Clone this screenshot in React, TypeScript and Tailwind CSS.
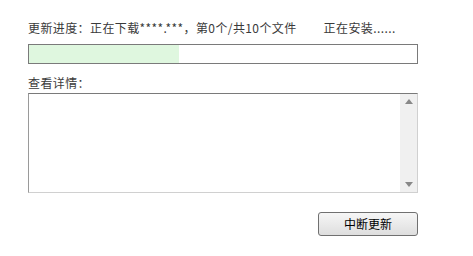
import React from 'react';

const font = { fontFamily: '"Microsoft YaHei", "Noto Sans CJK SC", "Liberation Sans", sans-serif' };

const UpdateDialog: React.FC = () => {
  const progress = 150 / 388;

  return (
    <div className="w-[473px] h-[256px] bg-white text-[#3a3a3a] text-[12px]" style={font}>
      <div className="pt-[20px] pl-[28px] w-[418px]">
        <div className="h-4 leading-4 flex whitespace-nowrap tracking-[0.4px]">
          <span>更新进度：正在下载****.***，第0个/共10个文件</span>
          <span className="ml-[27px]">正在安装......</span>
        </div>

        <div className="mt-[8px] h-[20px] w-[390px] border border-[#7a7a7a] bg-white">
          <div className="h-full bg-[#dff7df]" style={{ width: `${progress * 100}%` }} />
        </div>

        <div className="mt-[11px] h-4 leading-4 tracking-[0.4px]">查看详情：</div>

        <div className="mt-[2px] h-[100px] w-[390px] flex border border-[#d0d0d0] border-t-[#7a7a7a] border-l-[#9a9a9a] bg-white">
          <div className="flex-1" />
          <div className="w-[17px] bg-[#f0f0f0] flex flex-col justify-between items-center py-[5px]">
            <svg width="8" height="5" viewBox="0 0 8 5">
              <path d="M4 0 L8 5 L0 5 Z" fill="#888" />
            </svg>
            <svg width="8" height="5" viewBox="0 0 8 5">
              <path d="M0 0 L8 0 L4 5 Z" fill="#888" />
            </svg>
          </div>
        </div>

        <div className="mt-[19px] flex justify-end">
          <button className="w-[100px] h-[24px] rounded-[3px] border border-[#707070] bg-gradient-to-b from-[#f6f6f6] to-[#dedede] text-[12px] text-black">
            中断更新
          </button>
        </div>
      </div>
    </div>
  );
};

export default function App() {
  return <UpdateDialog />;
}
